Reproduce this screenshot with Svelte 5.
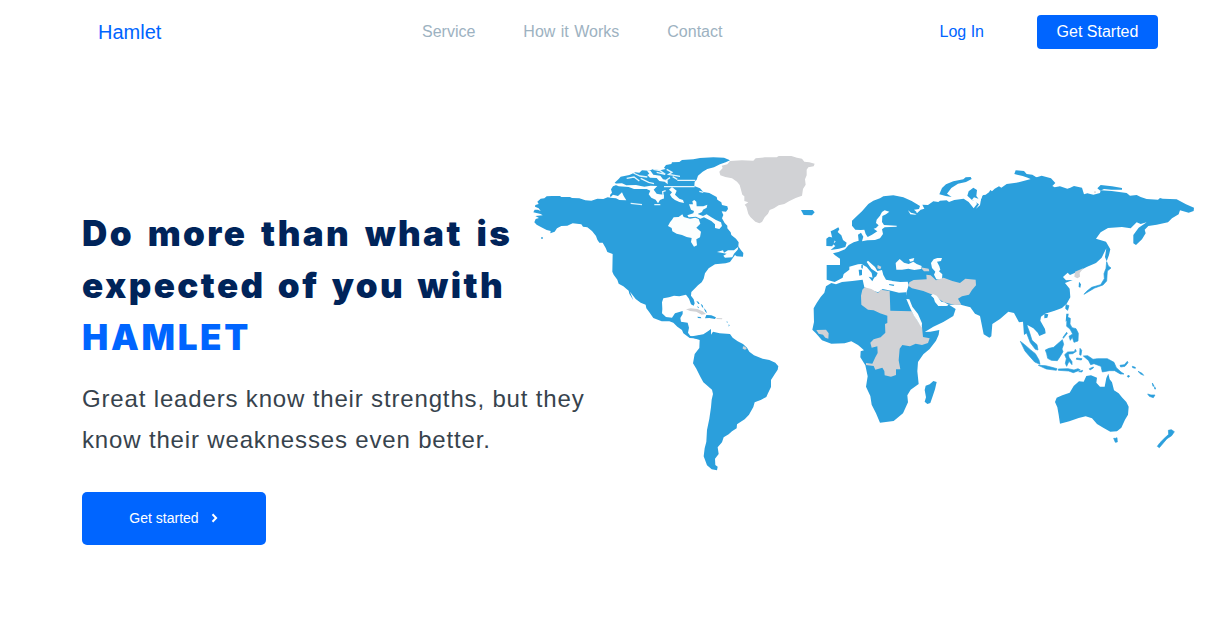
<script>
  const links = ['Service', 'How it Works', 'Contact'];

  // Each region is drawn on its own grid, three units to one pixel.
  const regions = [
    {
      name: 'north-america',
      x: 520,
      y: 145,
      shapes: [
        ['land', 'M40,202L44,194 54,194 62,198 56,190 45,185 46,180 56,177 52,170 62,161 73,160 80,154 96,153 120,153 124,156 150,156 156,159 178,160 196,166 214,167 232,161 250,162 263,157 272,158 270,150 276,143 273,133 279,124 291,119 284,113 296,102 302,95 328,90 346,82 358,83 366,76 388,77 398,73 420,76 437,72 432,68 438,60 454,57 456,52 478,51 486,45 520,43 540,39 580,37 612,38 630,46 617,52 600,58 582,67 562,72 548,80 534,92 530,104 524,110 523,123 540,130 550,141 568,144 590,156 592,164 604,172 606,180 622,184 624,192 618,200 605,199 610,210 606,220 614,234 622,242 622,250 632,262 634,270 648,281 656,292 655,304 662,314 670,324 669,335 650,334 645,330 630,351 617,355 585,358 566,370 555,385 551,401 545,412 534,421 526,429 514,441 513,452 521,463 524,475 521,482 513,478 507,461 498,449 478,454 462,452 447,457 430,460 426,472 427,492 426,505 438,516 456,518 465,505 488,498 488,507 481,519 483,530 503,533 507,548 504,563 511,573 525,575 538,571 542,583 520,580 509,579 490,565 486,555 472,545 460,533 448,529 425,529 400,519 387,500 379,490 377,479 362,473 347,462 330,440 340,466 328,446 326,437 310,424 296,416 292,404 281,389 277,380 278,327 262,321 257,309 248,293 238,293 232,284 228,273 216,258 202,247 189,245 184,238 158,235 142,242 124,243 111,250 104,260 91,265 92,258 80,255 64,247 50,239 43,232 47,222 57,219 46,213 68,211 62,207z M64,276h4v6h-4z'],
        ['sea', 'M444,243L450,232 456,224 461,217 476,216 487,208 491,216 510,221 526,218 536,222 541,236 529,248 543,260 540,277 529,283 531,301 522,305 513,291 515,279 500,276 486,270 470,266 457,259 455,249z'],
        ['sea', 'M507,178L519,178 517,169 523,165 529,170 530,184 550,184 562,179 560,188 549,194 546,201 533,207 549,213 560,208 574,217 588,225 603,232 606,243 598,252 585,249 585,238 574,228 552,217 541,221 528,215 506,217 502,211 520,205 522,198 513,194z'],
        ['sea', 'M591,321L609,316 612,323 624,316 642,316 655,305 653,314 642,326 637,337 615,338 610,332 620,326z'],
        ['sea', 'M270,158L279,149 294,153 306,142 311,153 319,166 298,165 288,160z'],
        ['sea', 'M278,116L306,115 319,121 348,120 373,125 392,122 412,123 401,134 410,146 418,148 432,149 432,160 420,165 414,175 407,164 394,158 386,148 391,137 380,132 342,132 326,126 296,124z'],
        ['sea', 'M447,134L456,126 470,137 465,149 478,161 489,165 492,174 478,171 465,165 456,158 450,149 456,142z'],
        ['sea', 'M380,76L392,78 400,89 421,92 429,103 443,106 443,118 434,110 418,108 410,99 390,98 382,90 388,86z'],
        ['channel', 'M432,125H524M472,106H526M440,73L456,82 446,88 480,94M320,100L342,96 358,108M340,84L360,93 382,96M362,100L386,112 402,116M332,175L366,179M403,179L421,179M410,82L435,88M458,95L472,103M400,73L420,77 436,88M435,108L450,98M538,139L550,142M430,160L428,140 437,137'],
        ['grey', 'M498,493L512,490 532,492 548,499 558,507 545,509 529,500 510,498zM590,519L607,520 606,523 589,522z'],
        ['land', 'M559,510L574,511 588,517 585,522 568,519 555,520zM529,468l6,2 4,6-4,1zM542,476l6,5 2,8-4-3zM551,489l7,7 3,9-5-5zM532,482l5,6-3,2zM532,515l10,1 2,4-10-1zM620,528l3,3-2,4zM626,538l3,3-3,4z']
      ]
    },
    {
      name: 'greenland',
      x: 640,
      y: 145,
      shapes: [
        ['grey', 'M238,80L248,69 245,62 262,58 270,48 306,46 340,47 347,40 374,37 410,37 416,33 454,33 471,38 486,41 493,50 508,52 524,56 521,64 505,67 500,74 500,91 495,103 497,119 489,132 486,152 467,159 447,169 433,177 416,181 402,190 389,195 384,206 374,217 366,231 358,235 346,230 331,216 325,207 319,185 314,179 325,172 313,168 313,154 307,149 299,120 291,110 276,100 256,96 241,91z'],
        ['land', 'M483,195L518,195 524,202 516,211 491,210z']
      ]
    },
    {
      name: 'south-america',
      x: 640,
      y: 285,
      shapes: [
        ['land', 'M148,155L178,150 190,148 205,138 213,132 213,149 219,140 239,145 270,147 278,158 293,169 309,177 321,188 328,200 342,211 368,221 388,225 406,233 415,244 413,254 403,269 393,285 393,306 384,325 379,336 362,345 344,352 340,366 327,389 314,403 291,418 290,430 276,439 266,448 251,457 246,472 233,487 236,507 225,521 226,540 233,545 231,556 215,553 201,541 191,514 194,490 199,470 201,435 208,401 213,367 215,344 219,327 216,314 190,292 181,275 169,251 159,235 164,207 178,189 179,165z'],
        ['grey', 'M309,184l7,1 4,6-5,3-7-3z']
      ]
    },
    {
      name: 'eurasia',
      x: 800,
      y: 160,
      shapes: [
        ['land', 'M80,315L120,315 120,296 105,286 99,280 115,276 135,268 146,255 161,247 176,242 174,224 183,218 190,230 186,244 202,241 225,240 240,235 249,222 246,208 254,202 290,200 290,197 252,195 246,186 247,168 258,163 268,155 254,151 246,156 240,167 230,179 228,189 236,196 228,204 221,206 232,214 216,224 203,231 197,222 193,209 182,210 166,209 156,197 156,182 170,169 186,154 205,132 220,122 240,115 250,109 280,106 310,112 335,123 360,138 357,147 342,149 349,155 351,163 333,158 324,151 331,163 346,164 362,149 373,146 367,134 384,135 400,124 415,126 420,122 440,121 447,126 463,120 491,116 506,126 521,145 531,132 527,124 516,120 502,107 506,94 520,83 531,90 529,108 541,123 547,106 557,104 567,97 571,90 576,94 584,86 597,79 604,83 620,72 656,67 690,58 725,47 753,55 766,69 757,78 764,82 780,79 802,86 811,83 822,78 846,83 852,103 862,100 880,104 900,99 902,91 935,93 980,99 990,107 1010,105 1022,111 1040,117 1074,119 1080,114 1088,116 1130,118 1158,133 1182,143 1181,153 1166,158 1140,151 1136,163 1116,175 1104,187 1070,194 1045,198 1034,209 1037,220 1026,238 1008,255 1000,250 1000,225 1016,203 1040,187 1022,192 1010,187 992,205 966,201 924,204 902,217 888,236 918,245 931,268 927,285 920,304 915,291 919,265 905,293 888,309 860,321 836,334 810,345 803,338 789,351 798,361 818,360 795,369 809,386 811,412 800,431 786,444 764,452 735,461 723,470 721,482 735,507 737,520 718,528 713,518 700,505 682,495 681,519 672,525 669,485 657,487 642,459 625,455 600,477 577,492 574,529 568,533 551,523 540,468 525,461 511,442 482,434 446,434 433,427 424,437 404,420 400,400 393,407 410,421 416,438 437,438 447,434 467,447 460,468 430,486 400,500 378,514 370,520 350,501 345,480 323,424 319,399 326,375 323,365 301,366 276,363 267,351 261,340 264,334 267,338 271,345 277,349 279,355 275,362 258,359 250,345 246,330 232,333 225,321 204,302 200,306 214,326 233,339 229,349 218,356 215,339 200,321 184,312 174,313 148,320 148,329 131,342 128,353 104,366 80,359z'],
        ['land', 'M79,258L79,236 87,230 101,233 104,242 97,259zM92,214L102,209 115,202 118,208 113,216 124,226 129,240 140,248 136,261 117,266 92,270 106,258 98,252 107,245 96,231z'],
        ['land', 'M418,103L426,84 438,73 460,64 490,58 497,52 512,51 515,57 498,66 474,71 454,84 441,101 455,111 437,108zM184,314l5,2 -1,10 -4-2zM176,329l10,0 0,16 -8,2zM206,350l16,4 -5,10zM268,372l15,2 -2,4 -14-3z'],
        ['sea', 'M289,329L287,309 299,297 312,308 326,312 340,305 350,312 365,318 363,327 343,330 325,326 306,329zM327,298L343,294 340,303 330,305z'],
        ['sea', 'M393,309L401,298 412,294 426,294 423,303 411,305 418,319 421,329 417,334 427,343 426,360 409,358 402,344 406,335 396,324z'],
        ['sea', 'M516,119L522,112 535,116 543,102 550,101 543,118 540,136 528,146 537,133z'],
        ['grey', 'M328,367L341,360 380,358 379,344 392,346 408,361 431,353 457,363 480,369 496,356 527,359 528,376 516,390 507,404 486,409 474,416 484,434 464,435 430,426 400,405 370,393 336,385 326,378zM361,322L386,326 388,334 372,334zM233,315l11,5 -3,8 -9-3z'],
        ['sea', 'M397,401L410,407 424,425 432,427 444,437 415,438 405,426z'],
        ['land', 'M643,42L647,31 672,33 680,42 697,44 714,55 700,61 683,53 668,48zM892,85L902,75 936,79 966,84 966,89 934,89 912,87 901,92zM906,97L922,96 928,103 909,106z'],
        ['isle', 'M918,325L920,305 925,318 933,324 922,333 920,363 909,375 884,384 852,403 860,394 875,382 902,374 913,356 912,341z'],
        ['grey', 'M825,335L851,324 839,339 840,350 832,355 823,350zM883,94h4v5h-4z'],
        ['land', 'M837,365l6,8-2,10-5-2zM799,461l7,0-3,18-6,6zM733,461l12,2-3,10-9,2z']
      ]
    },
    {
      name: 'africa',
      x: 800,
      y: 270,
      shapes: [
        ['land', 'M94,39L108,43 126,36 157,33 188,29 193,52 209,59 234,67 248,57 273,62 297,68 318,67 325,90 334,118 356,160 370,186 391,185 418,180 416,194 408,212 389,237 370,253 354,276 352,304 356,342 332,359 322,376 324,397 309,430 281,453 240,458 228,430 215,404 211,378 198,350 203,319 196,286 181,262 182,244 192,241 182,232 174,225 154,214 134,220 94,221 66,211 47,189 37,179 42,156 41,115 50,99 62,81 73,68 78,49z'],
        ['grey', 'M187,59L194,52 214,57 234,69 242,59 269,63 271,122 335,124 351,150 366,170 369,201 389,205 384,219 366,225 347,221 330,229 307,225 299,236 296,271 301,298 288,298 288,315 273,320 254,316 253,303 247,293 226,299 221,288 198,285 198,279 217,281 226,262 233,249 232,229 215,233 211,218 221,208 242,202 256,188 255,162 262,159 262,137 240,130 221,121 204,119 184,104 183,77z'],
        ['grey', 'M49,180L78,179 86,190 85,206 76,203 69,194 56,191z'],
        ['sea', 'M319,87L328,88 337,110 354,132 366,160 365,173 354,155 342,137 332,118z'],
        ['land', 'M374,395L378,382 374,360 377,347 389,343 400,333 410,336 405,358 398,379 391,399 382,402z']
      ]
    },
    {
      name: 'oceania',
      x: 1000,
      y: 270,
      shapes: [
        ['land', 'M165,396L170,383 187,376 209,368 221,348 237,334 251,335 259,318 273,316 291,323 289,338 300,350 314,350 319,324 325,311 329,328 336,337 342,361 356,370 367,383 379,396 386,410 384,434 375,449 364,473 351,484 331,485 311,474 291,462 276,445 257,439 236,444 208,454 180,461 176,434 172,412z'],
        ['isle', 'M341,505l6,0 4-2 1,13-6,1zM472,529L480,518 493,505 506,493 505,481 514,479 523,485 515,497 501,506 490,519 478,533z'],
        ['isle', 'M61,214L74,224 91,239 106,251 117,270 120,283 104,276 87,257 75,243zM115,286L137,287 156,292 171,296 169,301 139,297zM175,297L204,296 222,300 234,296 241,300 220,308 206,303 175,301zM77,157L87,182 96,211 111,224 114,240 106,238 91,218 80,190z'],
        ['isle', 'M136,240L147,235 161,232 178,217 187,209 191,223 186,237 189,245 180,260 172,272 154,271 143,265 140,251zM194,254L203,246 223,245 226,238 229,244 218,251 205,252 207,262 216,275 216,284 207,274 200,289 196,280 199,266z'],
        ['isle', 'M201,141L211,145 210,162 216,173 228,176 235,190 234,213 222,217 217,202 211,211 207,199 218,192 210,177 200,169zM189,202l11-15 2,3-12,15zM240,235l5,6-2,15-4-2zM230,264l16,2 -2,4-15-2z'],
        ['isle', 'M250,258L263,257 279,268 292,266 322,266 342,277 349,293 363,306 372,312 361,312 344,302 328,302 307,306 303,289 282,281 272,284 266,272zM360,286L373,284 382,274 384,278 375,289 362,291z'],
        ['isle', 'M397,289l9,3 0,3-8-2zM414,304l11,5 6,7-9-4zM457,339l5,9-3,1zM464,350l3,7-3,0zM443,372l10,3 12,0-5,8-12-4zM384,316l5,2-3,4-4-2zM198,104l9,3-4,14-6-5zM236,305l12-4 -2,5zM268,296l12-5 0,3-10,6z']
      ]
    }
  ];
</script>

<div class="page">
  <header>
    <a class="brand" href="#top">Hamlet</a>
    <nav>
      {#each links as link}
        <a href="#{link}">{link}</a>
      {/each}
    </nav>
    <div class="account">
      <a class="login" href="#login">Log In</a>
      <a class="signup" href="#signup">Get Started</a>
    </div>
  </header>

  <main>
    <section class="copy">
      <h1>
        <span class="l1">Do more than what is</span>
        <span class="l2">expected of you with</span>
        <span class="l3">HAMLET</span>
      </h1>
      <p>Great leaders know their strengths, but they<br />know their weaknesses even better.</p>
      <a class="cta" href="#start">
        <span>Get started</span>
        <svg viewBox="0 0 8 10" width="8" height="10" aria-hidden="true">
          <path d="M2 1.3 5.6 5 2 8.7" />
        </svg>
      </a>
    </section>
    <svg class="map" viewBox="530 150 670 326" aria-hidden="true">
      {#each regions as region (region.name)}
        <g transform="translate({region.x} {region.y}) scale(0.33333)">
          {#each region.shapes as [kind, d]}
            <path class={kind} {d} />
          {/each}
        </g>
      {/each}
    </svg>
  </main>
</div>

<style>
  :global(body) {
    background: #fff;
  }
  .page {
    box-sizing: border-box;
    width: 1212px;
    height: 641px;
    overflow: hidden;
    font-family: 'Liberation Sans', Arial, sans-serif;
    font-size: 16px;
  }
  a {
    text-decoration: none;
  }
  header {
    box-sizing: border-box;
    display: grid;
    grid-template-columns: 324px 1fr auto;
    align-items: center;
    height: 64px;
    padding: 0 54px 0 98px;
  }
  .brand {
    color: #0065ff;
    font-size: 20px;
  }
  nav {
    display: flex;
    gap: 48px;
  }
  nav a {
    color: #9db2c1;
    word-spacing: 1px;
  }
  .account {
    display: flex;
    align-items: center;
    gap: 53px;
  }
  .login {
    color: #0065ff;
  }
  .signup {
    box-sizing: border-box;
    width: 121px;
    height: 34px;
    border-radius: 4px;
    background: #0065ff;
    color: #fff;
    line-height: 34px;
    text-align: center;
  }
  main {
    display: flex;
    align-items: flex-start;
    padding-left: 82px;
  }
  .copy {
    flex: 0 0 510px;
    padding-top: 143px;
  }
  h1 {
    margin: 0;
    color: #00245a;
    font-family: 'Arial Black', Inter, sans-serif;
    font-size: 35px;
    font-weight: 900;
    line-height: 52px;
    letter-spacing: 2.4px;
  }
  h1 span {
    display: block;
    width: max-content;
  }
  .l1 {
    word-spacing: 4.3px;
  }
  .l2 {
    word-spacing: 3px;
  }
  .l3 {
    color: #0065ff;
    letter-spacing: 2.7px;
  }
  p {
    margin: 15px 0 32px;
    color: #37434d;
    font-size: 24px;
    line-height: 41px;
    letter-spacing: 0.84px;
    white-space: nowrap;
  }
  .cta {
    display: flex;
    align-items: center;
    justify-content: center;
    gap: 11px;
    box-sizing: border-box;
    width: 184px;
    height: 53px;
    padding-bottom: 2px;
    border-radius: 5px;
    background: #0065ff;
    color: #fff;
    font-size: 14px;
  }
  .cta svg {
    width: 9px;
    height: 10px;
  }
  .cta path {
    fill: none;
    stroke: #fff;
    stroke-width: 2;
  }
  .map {
    flex: none;
    width: 670px;
    height: 326px;
    margin: 86px 0 0 -62px;
  }
  .land {
    fill: #2b9fdc;
  }
  .isle {
    fill: #2b9fdc;
    stroke: #2b9fdc;
    stroke-width: 2;
  }
  .grey {
    fill: #d1d2d5;
  }
  .sea {
    fill: #fcfefe;
  }
  .channel {
    fill: none;
    stroke: #e4f5fc;
    stroke-width: 4;
  }
</style>
